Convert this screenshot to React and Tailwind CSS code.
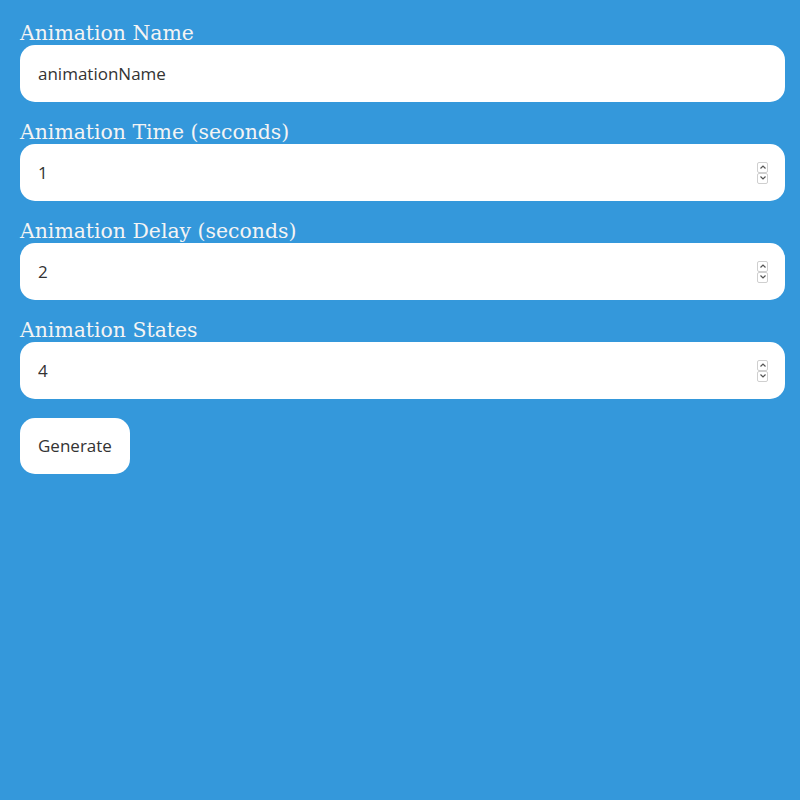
import { useState } from 'react';

const fields = [
  { id: 'name', label: 'Animation Name', type: 'text', value: 'animationName' },
  { id: 'time', label: 'Animation Time (seconds)', type: 'number', value: '1' },
  { id: 'delay', label: 'Animation Delay (seconds)', type: 'number', value: '2' },
  { id: 'states', label: 'Animation States', type: 'number', value: '4' },
];

function Chevron({ up }) {
  return (
    <svg width="6" height="4" viewBox="0 0 6 4" fill="none" stroke="#555" strokeWidth="1.2">
      <path d={up ? 'M0.5 3.5 L3 1 L5.5 3.5' : 'M0.5 0.5 L3 3 L5.5 0.5'} />
    </svg>
  );
}

export default function App() {
  const [values, setValues] = useState(
    Object.fromEntries(fields.map(f => [f.id, f.value]))
  );

  function step(id, d) {
    setValues(v => ({ ...v, [id]: String((Number(v[id]) || 0) + d) }));
  }

  return (
    <div className="min-h-screen bg-[#3498db] pt-5 px-5">
      {fields.map(f => (
        <div key={f.id}>
          <label
            htmlFor={f.id}
            className="block pt-[2px] text-[20.4px] leading-[23px] text-[#f4f4f4] font-['DejaVu_Serif',serif]"
          >
            {f.label}
          </label>
          <div className="relative w-[765px] mb-[17px]">
            <input
              id={f.id}
              type={f.type}
              value={values[f.id]}
              onChange={e => setValues({ ...values, [f.id]: e.target.value })}
              className="block w-full h-[57px] px-[18px] py-[17px] rounded-[15px] bg-white text-[17px] text-[#333] font-['Open_Sans',sans-serif] outline-none [&::-webkit-inner-spin-button]:appearance-none [&::-webkit-inner-spin-button]:hidden"
            />
            {f.type === 'number' && (
              <div className="absolute right-[17px] top-1/2 -translate-y-1/2 flex flex-col">
                <button
                  onClick={() => step(f.id, 1)}
                  className="w-[11px] h-[11px] flex items-center justify-center border border-[#cfcfcf] rounded-[2px] bg-white"
                >
                  <Chevron up />
                </button>
                <button
                  onClick={() => step(f.id, -1)}
                  className="w-[11px] h-[11px] flex items-center justify-center border border-[#cfcfcf] rounded-[2px] bg-white"
                >
                  <Chevron />
                </button>
              </div>
            )}
          </div>
        </div>
      ))}
      <button className="mt-[2px] h-[56px] px-[18px] rounded-[15px] bg-white text-[17px] text-[#333] font-['Open_Sans',sans-serif]">
        Generate
      </button>
    </div>
  );
}
